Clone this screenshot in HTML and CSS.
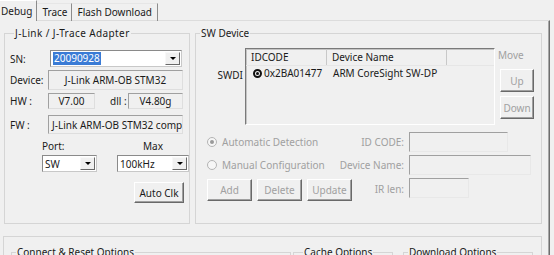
FILE: index.html
```html
<!DOCTYPE html>
<html lang="en">
<head>
    <meta charset="UTF-8">
    <title>Debug Settings</title>
    <link rel="stylesheet" href="styles.css">
</head>
<body>
    <div class="window">
        <div class="tabs">
            <div class="tab active">Debug</div>
            <div class="tab">Trace</div>
            <div class="tab">Flash Download</div>
        </div>
        <div class="panel">
            <div class="groups">
                <fieldset class="adapter">
                    <legend class="wide-legend">J-Link / J-Trace Adapter</legend>
                    <div class="row sn">
                        <span class="lbl">SN:</span>
                        <div class="combo snbox"><span class="txt"><span class="sel">20090928</span></span><span class="drop"></span></div>
                    </div>
                    <div class="row device">
                        <span class="lbl">Device:</span>
                        <div class="field wide center">J-Link ARM-OB STM32</div>
                    </div>
                    <div class="row hw">
                        <span class="lbl">HW :</span>
                        <div class="field hwv center">V7.00</div>
                        <span class="dll">dll :</span>
                        <div class="field dllv center">V4.80g</div>
                    </div>
                    <div class="row fw">
                        <span class="lbl">FW :</span>
                        <div class="field wide">J-Link ARM-OB STM32 compiled</div>
                    </div>
                    <div class="portmax">
                        <div class="pcol">
                            <span class="plbl">Port:</span>
                            <div class="combo port"><span class="txt">SW</span><span class="drop"></span></div>
                        </div>
                        <div class="pcol max">
                            <span class="plbl">Max</span>
                            <div class="combo clk"><span class="txt">100kHz</span><span class="drop"></span></div>
                        </div>
                    </div>
                    <div class="actions">
                        <button class="btn autoclk">Auto Clk</button>
                    </div>
                </fieldset>

                <fieldset class="swdev">
                    <legend>SW Device</legend>
                    <div class="chain">
                        <span class="swdi">SWDI</span>
                        <div class="list">
                            <div class="lhead">
                                <span class="c1">IDCODE</span>
                                <span class="c2">Device Name</span>
                                <span class="c3"></span>
                            </div>
                            <div class="lrow">
                                <span class="c1"><i class="dot"></i>0x2BA01477</span>
                                <span class="c2">ARM CoreSight SW-DP</span>
                            </div>
                        </div>
                        <div class="move">
                            <span class="dim">Move</span>
                            <button class="btn off up">Up</button>
                            <button class="btn off down">Down</button>
                        </div>
                    </div>
                    <div class="config">
                        <label class="radio"><i class="rb on"></i>Automatic Detection</label>
                        <span class="flbl">ID CODE:</span>
                        <div class="field box idc"></div>
                        <label class="radio"><i class="rb"></i>Manual Configuration</label>
                        <span class="flbl">Device Name:</span>
                        <div class="field box dname"></div>
                        <div class="btnrow">
                            <button class="btn off">Add</button>
                            <button class="btn off">Delete</button>
                            <button class="btn off">Update</button>
                        </div>
                        <span class="flbl">IR len:</span>
                        <div class="field box irl"></div>
                    </div>
                </fieldset>
            </div>

            <div class="options">
                <fieldset class="opt connect"><legend>Connect &amp; Reset Options</legend></fieldset>
                <fieldset class="opt cache"><legend>Cache Options</legend></fieldset>
                <fieldset class="opt download"><legend>Download Options</legend></fieldset>
            </div>
        </div>
    </div>
</body>
</html>
```

FILE: styles.css
```css
*{
    box-sizing: border-box;
}
body{
    margin: 0;
    background: #f0f0f0;
    font: 10px "Noto Sans", "Liberation Sans", sans-serif;
    color: #1a1a1a;
    overflow: hidden;
}
.window{
    width: 550px;
    height: 255px;
}

/* tabs */
.tabs{
    display: flex;
    height: 21px;
    position: relative;
    z-index: 1;
}
.tab{
    height: 18px;
    margin-top: 3px;
    padding: 0 4px 0 5px;
    line-height: 16px;
    border-top: 1px solid #e6e6e6;
    border-right: 1px solid #8c8c8c;
}
.tab:last-child{
    padding-right: 5px;
}
.tab.active{
    height: 21px;
    margin-top: 0;
    margin-left: -4px;
    padding-right: 4px;
    line-height: 20px;
    background: #f0f0f0;
    border-top: 1px solid #fff;
}
.panel{
    height: 235px;
    margin-top: -1px;
    padding: 5px 0 0 4px;
    border-top: 1px solid #dcdcdc;
    border-right: 1px solid #6e6e6e;
    box-shadow: inset -1px 0 #a8a8a8;
}

/* group boxes */
fieldset{
    margin: 0;
    padding: 0;
    min-width: 0;
    border: 1px solid #d5d5d5;
}
legend{
    margin-left: 4px;
    padding: 0 1px;
    line-height: 14px;
}
.wide-legend{
    letter-spacing: 0.4px;
}
.groups{
    display: flex;
    gap: 5px;
}
.adapter{
    width: 186px;
    height: 198px;
    padding: 10px 5px 0 5px;
}
.swdev{
    width: 347px;
    height: 198px;
    padding: 8px 0 0 0;
}

/* adapter rows */
.row{
    display: flex;
    align-items: center;
}
.lbl{
    width: 38px;
    flex-shrink: 0;
}
.device{
    margin-top: 3px;
}
.hw{
    margin-top: 3px;
}
.fw{
    margin-top: 6px;
}
.field{
    height: 20px;
    padding: 0 3px;
    display: flex;
    align-items: center;
    white-space: nowrap;
    overflow: hidden;
    border: 1px solid;
    border-color: #a0a0a0 #dedede #dedede #a0a0a0;
}
.center{
    justify-content: center;
}
.wide{
    width: 135px;
}
.hw .field{
    height: 16px;
}
.hwv{
    width: 47px;
}
.dll{
    width: 33px;
    padding-left: 15px;
    white-space: nowrap;
}
.dllv{
    width: 55px;
}
.fw .field{
    height: 19px;
}

/* combo boxes */
.combo{
    height: 17px;
    display: flex;
    padding: 1px;
    background: #fff;
    border: 1px solid;
    border-color: #8a8a8a #c8c8c8 #c8c8c8 #8a8a8a;
}
.combo .txt{
    flex: 1;
    display: flex;
    align-items: center;
    padding-left: 1px;
    overflow: hidden;
}
.sel{
    background: #3a7bd5;
    color: #fff;
    padding: 0 1px;
    line-height: 13px;
}
.drop{
    width: 15px;
    flex-shrink: 0;
    display: flex;
    align-items: center;
    justify-content: center;
    background: #f0f0f0;
    border: 1px solid;
    border-color: #f8f8f8 #696969 #696969 #f8f8f8;
}
.drop::after{
    content: "";
    border-top: 3px solid #000;
    border-left: 3px solid transparent;
    border-right: 3px solid transparent;
}
.snbox{
    width: 132px;
    margin-left: 2px;
}
.portmax{
    display: flex;
    gap: 20px;
    margin-top: 5px;
    padding-left: 32px;
}
.pcol{
    display: flex;
    flex-direction: column;
}
.plbl{
    line-height: 14px;
    margin-bottom: 2px;
}
.max{
    align-items: center;
}
.port{
    width: 55px;
}
.clk{
    width: 72px;
}

/* buttons */
.btn{
    font: inherit;
    color: #1a1a1a;
    background: #f0f0f0;
    padding: 0;
    border: 1px solid;
    border-color: #fff #696969 #696969 #fff;
    box-shadow: inset -1px -1px #a0a0a0;
}
.btn.off{
    color: #a0a0a0;
}
.actions{
    display: flex;
    justify-content: flex-end;
    margin-top: 10px;
}
.autoclk{
    width: 50px;
    height: 21px;
}

/* device chain list */
.chain{
    display: flex;
}
.swdi{
    width: 47px;
    margin-right: 2px;
    margin-top: 20px;
    text-align: right;
    line-height: 14px;
}
.list{
    width: 250px;
    height: 77px;
    border: 1px solid;
    border-color: #7a7a7a #fff #fff #7a7a7a;
    box-shadow: inset 1px 1px #c4c4c4;
}
.lhead, .lrow{
    display: flex;
}
.lhead{
    height: 17px;
    align-items: center;
    border-bottom: 1px solid #e6e6e6;
}
.lhead span{
    height: 100%;
    display: flex;
    align-items: center;
    border-right: 1px solid #c8c8c8;
}
.lhead .c3{
    border-right: 0;
}
.c1{
    width: 81px;
    padding-left: 5px;
}
.c2{
    width: 120px;
    padding-left: 5px;
}
.c3{
    flex: 1;
}
.lrow{
    height: 14px;
    align-items: center;
}
.lrow .c1{
    display: flex;
    align-items: center;
    padding-left: 7px;
}
.lrow .c2{
    padding-left: 6px;
}
.dot{
    width: 9px;
    height: 9px;
    margin-right: 2px;
    border: 2px solid #111;
    border-radius: 50%;
    display: flex;
    align-items: center;
    justify-content: center;
}
.dot::after{
    content: "";
    width: 3px;
    height: 3px;
    border-radius: 50%;
    background: #111;
}
.move{
    width: 34px;
    margin-left: 5px;
    display: flex;
    flex-direction: column;
}
.dim{
    color: #a0a0a0;
    line-height: 14px;
    margin-left: -2px;
}
.up{
    height: 23px;
    margin-top: 7px;
}
.down{
    height: 23px;
    margin-top: 4px;
}

/* detection config */
.config{
    display: grid;
    grid-template-columns: 128px 74px auto;
    grid-template-rows: 20px 20px 22px;
    row-gap: 3px;
    align-items: center;
    margin-top: 7px;
    padding-left: 11px;
    color: #a0a0a0;
}
.radio{
    display: flex;
    align-items: center;
    white-space: nowrap;
}
.rb{
    width: 10px;
    height: 10px;
    margin-right: 5px;
    border: 1px solid #b4b4b4;
    border-radius: 50%;
    background: #f6f6f6;
    display: flex;
    align-items: center;
    justify-content: center;
}
.rb.on::after{
    content: "";
    width: 4px;
    height: 4px;
    border-radius: 50%;
    background: #9a9a9a;
}
.flbl{
    text-align: right;
    padding-right: 5px;
    white-space: nowrap;
}
.box{
    height: 20px;
    border-color: #a0a0a0 #e8e8e8 #e8e8e8 #a0a0a0;
}
.idc{
    width: 99px;
}
.dname{
    width: 122px;
}
.irl{
    width: 60px;
    align-self: start;
}
.btnrow{
    display: flex;
    gap: 5px;
    align-self: start;
    margin-top: 1px;
}
.btnrow .btn{
    width: 45px;
    height: 22px;
    flex-shrink: 0;
}

/* bottom options */
.options{
    display: flex;
    width: 539px;
    height: 40px;
    margin: 12px 0 0 -1px;
    padding: 8px 0 0 7px;
    border: 1px solid #d5d5d5;
}
.opt{
    height: 40px;
}
.connect{
    width: 280px;
}
.cache{
    width: 100px;
    margin-left: 2px;
}
.cache legend{
    margin-left: 9px;
}
.download{
    width: 130px;
    margin-left: 10px;
}
```
